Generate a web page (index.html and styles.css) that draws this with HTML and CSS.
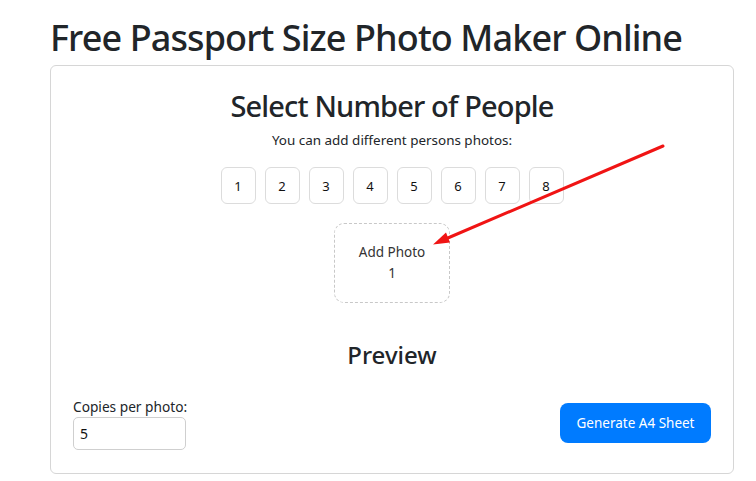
FILE: index.html
```html
<!DOCTYPE html>
<html lang="en">
<head>
<meta charset="utf-8">
<title>Free Passport Size Photo Maker Online</title>
<link rel="stylesheet" href="styles.css">
</head>
<body>
<div class="page">
  <h1 class="title">Free Passport Size Photo Maker Online</h1>
  <div class="card">
    <h2 class="section-title">Select Number of People</h2>
    <p class="hint">You can add different persons photos:</p>
    <div class="count-row">
      <button class="count-btn">1</button>
      <button class="count-btn">2</button>
      <button class="count-btn">3</button>
      <button class="count-btn">4</button>
      <button class="count-btn">5</button>
      <button class="count-btn">6</button>
      <button class="count-btn">7</button>
      <button class="count-btn">8</button>
    </div>
    <div class="slots">
      <div class="slot">
        <span>Add Photo</span>
        <span>1</span>
      </div>
    </div>
    <h3 class="preview-title">Preview</h3>
    <div class="controls">
      <div class="field">
        <label class="field-label" for="copies">Copies per photo:</label>
        <input class="field-input" id="copies" type="text" value="5">
      </div>
      <button class="primary-btn">Generate A4 Sheet</button>
    </div>
  </div>
</div>
<svg class="arrow" width="756" height="481" viewBox="0 0 756 481">
  <line x1="663" y1="146" x2="442" y2="240.5" stroke="#f01414" stroke-width="3" stroke-linecap="round"/>
  <polygon points="433,244.5 446,232.5 450,242.5" fill="#f01414"/>
</svg>
</body>
</html>
```
FILE: styles.css
```css
* { box-sizing: border-box; }
html, body { margin: 0; padding: 0; background: #fff; }
body {
  font-family: "Noto Sans", "Open Sans", sans-serif;
  color: #212529;
  position: relative;
  width: 756px;
  height: 481px;
  overflow: hidden;
}
.page {
  padding: 16px 22px 0 50px;
}
.title {
  margin: 0 0 6px 0;
  font-size: 36px;
  font-weight: 500;
  line-height: 43px;
  letter-spacing: -0.9px;
}
.card {
  width: 684px;
  border: 1px solid #d6d6d6;
  border-radius: 6px;
  padding: 22px 22px 23px 22px;
}
.section-title {
  margin: 0;
  text-align: center;
  font-size: 29px;
  font-weight: 500;
  line-height: 36px;
  letter-spacing: -0.85px;
}
.hint {
  margin: 6px 0 0 0;
  text-align: center;
  font-size: 13.45px;
  line-height: 21px;
}
.count-row {
  margin-top: 16px;
  display: flex;
  justify-content: center;
  gap: 9px;
}
.count-btn {
  width: 35px;
  height: 37px;
  padding: 0;
  border: 1px solid #dcdcdc;
  border-radius: 6px;
  background: #fff;
  font-family: inherit;
  font-size: 13px;
  color: #111;
}
.slots {
  margin-top: 19px;
  display: flex;
  justify-content: center;
}
.slot {
  width: 116px;
  height: 80px;
  border: 1px dashed #c8c8c8;
  border-radius: 10px;
  display: flex;
  flex-direction: column;
  align-items: center;
  justify-content: center;
  font-size: 13.5px;
  line-height: 21px;
  color: #333;
}
.preview-title {
  margin: 37px 0 0 0;
  text-align: center;
  font-size: 24px;
  font-weight: 500;
  line-height: 30px;
}
.controls {
  margin-top: 26px;
  display: flex;
  justify-content: space-between;
  align-items: center;
}
.field {
  display: flex;
  flex-direction: column;
}
.field-label {
  font-size: 13.7px;
  line-height: 21px;
}
.field-input {
  width: 113px;
  height: 33px;
  border: 1px solid #cfcfcf;
  border-radius: 5px;
  padding: 0 6px;
  font-family: inherit;
  font-size: 14px;
  color: #111;
}
.primary-btn {
  width: 151px;
  height: 40px;
  border: none;
  border-radius: 8px;
  background: #007bff;
  color: #fff;
  font-family: inherit;
  font-size: 13.5px;
  padding: 0;
}
.arrow {
  position: absolute;
  left: 0;
  top: 0;
  pointer-events: none;
}
```
